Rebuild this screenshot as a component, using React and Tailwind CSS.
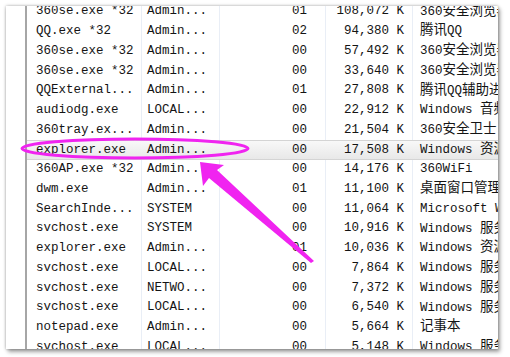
import React from "react";

const rows = [
  ["360se.exe *32", "Admin...", "01", "108,072 K", "360安全浏览器"],
  ["QQ.exe *32", "Admin...", "02", "94,380 K", "腾讯QQ"],
  ["360se.exe *32", "Admin...", "00", "57,492 K", "360安全浏览器"],
  ["360se.exe *32", "Admin...", "00", "33,640 K", "360安全浏览器"],
  ["QQExternal...", "Admin...", "01", "27,808 K", "腾讯QQ辅助进程"],
  ["audiodg.exe", "LOCAL...", "00", "22,912 K", "Windows 音频设备"],
  ["360tray.ex...", "Admin...", "00", "21,504 K", "360安全卫士"],
  ["explorer.exe", "Admin...", "00", "17,508 K", "Windows 资源管理器"],
  ["360AP.exe *32", "Admin...", "00", "14,176 K", "360WiFi"],
  ["dwm.exe", "Admin...", "01", "11,100 K", "桌面窗口管理器"],
  ["SearchInde...", "SYSTEM", "00", "11,064 K", "Microsoft Windows"],
  ["svchost.exe", "SYSTEM", "00", "10,916 K", "Windows 服务主进程"],
  ["explorer.exe", "Admin...", "01", "10,036 K", "Windows 资源管理器"],
  ["svchost.exe", "LOCAL...", "00", "7,864 K", "Windows 服务主进程"],
  ["svchost.exe", "NETWO...", "00", "7,372 K", "Windows 服务主进程"],
  ["svchost.exe", "LOCAL...", "00", "6,540 K", "Windows 服务主进程"],
  ["notepad.exe", "Admin...", "00", "5,664 K", "记事本"],
  ["svchost.exe", "LOCAL...", "00", "5,148 K", "Windows 服务主进程"],
];

// CJK glyphs in the original are a touch wider than the latin ones
const Desc = ({ text }) => (
  <span className="whitespace-pre">
    {text.split(/([\u4e00-\u9fff]+)/).map((part, i) =>
      /[\u4e00-\u9fff]/.test(part) ? (
        <span key={i} className="text-[13.5px]">
          {part}
        </span>
      ) : (
        part
      )
    )}
  </span>
);

const Row = ({ r, selected }) => {
  const line = selected ? "border-transparent" : "border-[#e9eef6]";
  return (
    <div
      className={
        "flex h-[19.73px] items-center whitespace-nowrap " +
        (selected
          ? "bg-gradient-to-b from-[#f8f8f8] to-[#e8e8e8] border-y border-[#d4d4d4]"
          : "")
      }
    >
      <div className={"w-[115px] h-full flex items-center pl-[9px] border-r " + line}>
        {r[0]}
      </div>
      <div className={"w-[78px] h-full flex items-center pl-[5px] border-r " + line}>
        {r[1]}
      </div>
      <div className={"w-[106px] h-full flex items-center justify-end pr-[18px] border-r " + line}>
        {r[2]}
      </div>
      <div className={"w-[87px] h-full flex items-center justify-end pr-[8px] border-r " + line}>
        {r[3]}
      </div>
      <div className="flex-1 h-full flex items-center pl-[7px] overflow-hidden">
        <Desc text={r[4]} />
      </div>
    </div>
  );
};

const App = () => {
  return (
    <div
      className="relative w-[510px] h-[357px] bg-white pt-[6px] pl-[6px] overflow-hidden"
      style={{ fontFamily: '"Liberation Mono", "Noto Sans CJK SC", monospace' }}
    >
      <div className="w-[492px] h-[343px] bg-white overflow-hidden flex shadow-[0_0_3px_rgba(0,0,0,0.35),2px_3px_4px_rgba(0,0,0,0.35)]">
        <div className="w-[19px] shrink-0" />
        <div className="w-[2px] shrink-0 bg-[#a6a6a6]" />
        <div className="flex-1 mt-[-4px] text-[12.5px] text-[#141414]">
          {rows.map((r, i) => (
            <Row key={i} r={r} selected={i === 7} />
          ))}
        </div>
      </div>

      <svg
        className="absolute left-0 top-0 pointer-events-none"
        width="510"
        height="357"
        viewBox="0 0 510 357"
      >
        <ellipse
          cx="135"
          cy="148.5"
          rx="113"
          ry="9.5"
          fill="none"
          stroke="#f024f0"
          strokeWidth="3"
        />
        <polygon
          points="200,162 224,165 217,170 314,261 311,263 209,178 203,186"
          fill="#f024f0"
        />
      </svg>
    </div>
  );
};

export default App;
